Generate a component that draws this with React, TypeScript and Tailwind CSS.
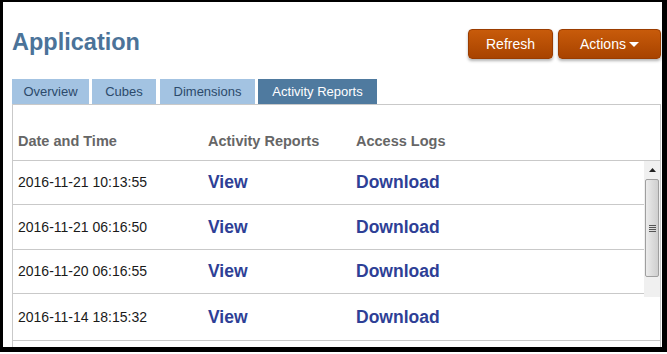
import React from 'react';

const rows = [
  { date: '2016-11-21 10:13:55', h: 'h-[44px]' },
  { date: '2016-11-21 06:16:50', h: 'h-[45px]' },
  { date: '2016-11-20 06:16:55', h: 'h-[44px]' },
  { date: '2016-11-14 18:15:32', h: 'h-[47px]' },
];

const tabs = [
  { label: 'Overview', w: 'w-[77px]' },
  { label: 'Cubes', w: 'w-[64px]' },
  { label: 'Dimensions', w: 'w-[95px] ml-[1px]' },
  { label: 'Activity Reports', w: 'w-[119px]' },
];

function Scrollbar() {
  return (
    <div className="absolute right-0 top-0 w-[16px] h-[136px] bg-[#f0f0f0] flex flex-col items-center">
      {/* up arrow */}
      <div className="h-[18px] w-full flex items-center justify-center">
        <svg width="7" height="4" viewBox="0 0 7 4">
          <path d="M0 4 L3.5 0 L7 4 Z" fill="#222" />
        </svg>
      </div>
      {/* thumb */}
      <div className="w-[14px] h-[98px] rounded-[2px] border border-[#9f9f9f] bg-gradient-to-r from-[#ececec] via-[#dcdcdc] to-[#cfcfcf] flex items-center justify-center">
        <div className="flex flex-col gap-[1px]">
          <div className="w-[7px] h-[1px] bg-[#555]" />
          <div className="w-[7px] h-[1px] bg-[#555]" />
          <div className="w-[7px] h-[1px] bg-[#555]" />
          <div className="w-[7px] h-[1px] bg-[#555]" />
        </div>
      </div>
    </div>
  );
}

export default function App() {
  return (
    <div className="w-[667px] h-[354px] bg-white font-['Liberation_Sans',Arial,sans-serif]">
      <div className="h-[352px] border-black border-t-2 border-l-[3px] border-r-[5px] border-b-[5px] overflow-hidden pl-[9px] pr-[1px]">
        {/* title + actions */}
        <div className="flex items-start justify-between pt-[27px]">
          <h1 className="text-[23.5px] leading-[26px] font-bold text-[#4b7399]">Application</h1>
          <div className="flex gap-[5px]">
            <button className="w-[85px] h-[30px] rounded-[4px] border border-[#9a3c00] bg-gradient-to-b from-[#c85b0b] to-[#a84300] text-white text-[14px] shadow-[0_2px_3px_rgba(0,0,0,0.3)]">
              Refresh
            </button>
            <button className="w-[103px] h-[30px] rounded-[4px] border border-[#9a3c00] bg-gradient-to-b from-[#c85b0b] to-[#a84300] text-white text-[14px] shadow-[0_2px_3px_rgba(0,0,0,0.3)] flex items-center justify-center gap-[3px]">
              <span>Actions</span>
              <svg width="10" height="5" viewBox="0 0 10 5">
                <path d="M0 0 L10 0 L5 5 Z" fill="#fff" />
              </svg>
            </button>
          </div>
        </div>

        {/* tabs */}
        <div className="flex gap-[3px] mt-[20px] h-[25px]">
          {tabs.map((t, i) =>
            i === 3 ? (
              <div key={t.label} className={`${t.w} h-[25px] leading-[25px] text-center text-[13px] bg-[#4f7a9f] text-white`}>
                {t.label}
              </div>
            ) : (
              <div key={t.label} className={`${t.w} h-[25px] leading-[25px] text-center text-[13px] bg-[#a3c3e2] text-[#2c4a6b]`}>
                {t.label}
              </div>
            )
          )}
        </div>

        {/* panel */}
        <div className="border border-b-0 border-[#c9c9c9] h-[300px]">
          <div className="h-[56px] border-b border-[#c9c9c9] flex items-end pb-[9px] pl-[5px] text-[14.5px] leading-[20px] font-bold text-[#666]">
            <div className="w-[190px]">Date and Time</div>
            <div className="w-[148px]">Activity Reports</div>
            <div>Access Logs</div>
          </div>
          <div className="relative">
            {rows.map((r) => (
              <div key={r.date} className={`${r.h} border-b border-[#c9c9c9] flex items-center pl-[5px]`}>
                <div className="w-[190px] text-[14px] text-[#1a1a1a]">{r.date}</div>
                <a className="w-[148px] text-[17.5px] font-bold text-[#2e3f96]">View</a>
                <a className="text-[17.5px] font-bold text-[#2e3f96]">Download</a>
              </div>
            ))}
            <Scrollbar />
          </div>
        </div>
      </div>
    </div>
  );
}
